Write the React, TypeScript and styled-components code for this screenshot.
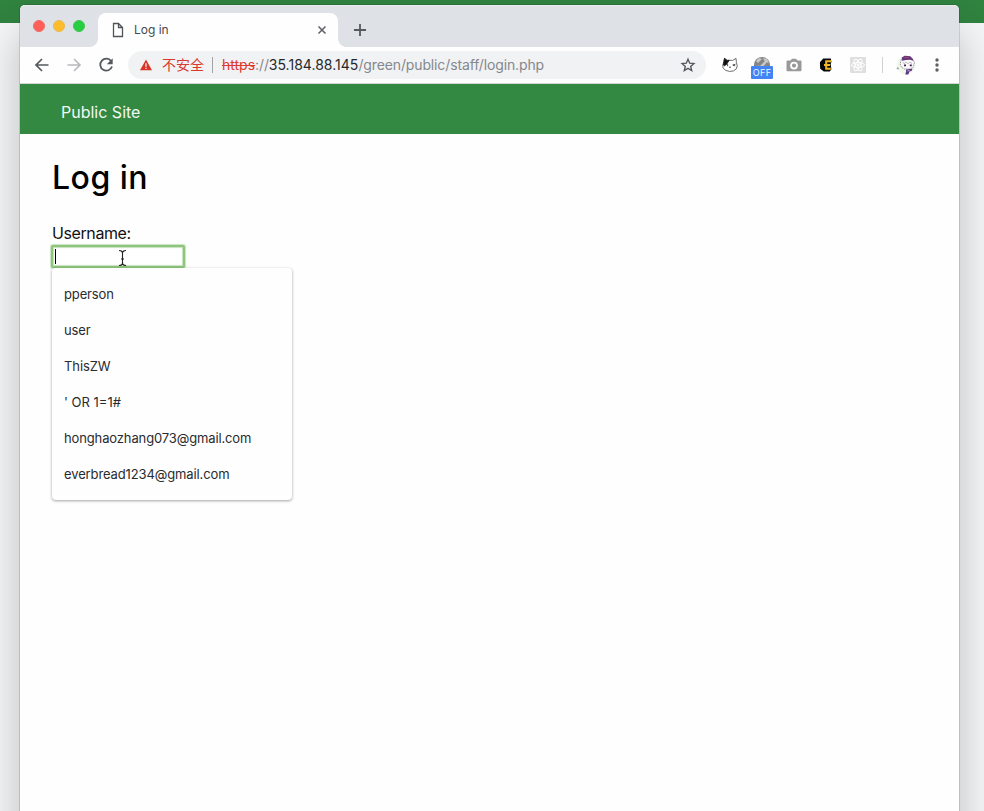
import React from 'react';
import styled, { createGlobalStyle } from 'styled-components';

const GlobalStyle = createGlobalStyle`
  * { box-sizing: border-box; }
  html, body { margin: 0; padding: 0; }
  body { font-family: Inter, 'Liberation Sans', 'Noto Sans CJK SC', sans-serif; overflow: hidden; }
`;

const Desktop = styled.div`
  width: 984px;
  height: 811px;
  padding: 5px 25px 0 20px;
  overflow: hidden;
  background: linear-gradient(#30823f 0 23px, #f4f5f6 23px);
`;

const Window = styled.main`
  width: 939px;
  height: 870px;
  border-radius: 5px 5px 0 0;
  background: #fefefe;
  box-shadow: 0 0 0 1px rgba(0, 0, 0, 0.12), 0 28px 40px rgba(0, 0, 0, 0.23);
`;

const TabStrip = styled.header`
  height: 42px;
  display: flex;
  background: #dee1e6;
  border-radius: 5px 5px 0 0;
  border-top: 1px solid #e9ebee;
`;

const Lights = styled.div`
  display: flex;
  gap: 8px;
  width: 78px;
  padding: 14.4px 0 0 13px;
`;

const Light = styled.span<{ $color: string; $edge: string }>`
  width: 12px;
  height: 12px;
  border-radius: 50%;
  background: ${(p) => p.$color};
  border: 1px solid ${(p) => p.$edge};
`;

const Tab = styled.div`
  position: relative;
  width: 240px;
  height: 34px;
  margin-top: 7px;
  padding: 0 6px 0 14px;
  display: flex;
  align-items: center;
  border-radius: 8px 8px 0 0;
  background: #fefefe;
  &::before, &::after {
    content: '';
    position: absolute;
    bottom: 0;
    width: 8px;
    height: 8px;
  }
  &::before { left: -8px; background: radial-gradient(circle at 0 0, transparent 7.5px, #fefefe 8px); }
  &::after { right: -8px; background: radial-gradient(circle at 100% 0, transparent 7.5px, #fefefe 8px); }
`;

const TabTitle = styled.span`
  flex: 1;
  margin: -2px 0 0 10px;
  font-size: 12px;
  letter-spacing: 0;
  color: #45494d;
`;

const TabClose = styled.span`
  height: 16px;
  margin-top: 4px;
`;

const NewTab = styled.div`
  padding: 17px 0 0 15px;
`;

const Toolbar = styled.nav`
  height: 37px;
  display: flex;
  align-items: center;
  border-bottom: 1px solid #d5d8d8;
  background: #fefefe;
  svg { display: block; flex: none; }
`;

const NavButtons = styled.div`
  display: flex;
  gap: 16px;
  width: 108px;
  padding-left: 14px;
`;

const AddressBar = styled.div`
  width: 578px;
  height: 28px;
  padding: 0 10px 0 12px;
  display: flex;
  align-items: center;
  border-radius: 14px;
  background: #f1f2f4;
  font-size: 14px;
  white-space: nowrap;
`;

const Warning = styled.span`
  width: 42px;
  margin: -2px 8px 0 10px;
  font: 14px/20px 'Noto Sans CJK SC', sans-serif;
  color: #d93a2e;
`;

const Divider = styled.i<{ $light?: boolean }>`
  width: 1px;
  height: 16px;
  background: ${(p) => (p.$light ? '#d0d1d3' : '#a2a4a7')};
`;

const Url = styled.span`
  flex: 1;
  margin: -1px 0 0 9px;
  color: #85888c;
  letter-spacing: -0.13px;
`;
const Scheme = styled.s`
  color: #e0392d;
  letter-spacing: 0;
`;
const Host = styled.span`
  color: #25282b;
  letter-spacing: 0.02px;
`;

const Extensions = styled.div`
  display: flex;
  align-items: center;
  width: 160px;
  margin-left: 16px;
  gap: 16px;
`;

const SpeedBadge = styled.div`
  position: relative;
  width: 20px;
  height: 20px;
  margin: 0 -2px;
  padding: 1px 0 0 2px;
`;

const OffLabel = styled.b`
  position: absolute;
  left: -1px;
  top: 11px;
  width: 22px;
  height: 13px;
  border-radius: 1px;
  background: #4384f4;
  color: #eef5ff;
  font: 9px/14px Inter, sans-serif;
  letter-spacing: 0.4px;
  text-align: center;
`;

const Profile = styled.div`
  display: flex;
  align-items: center;
  gap: 13px;
`;

const SiteHeader = styled.div`
  height: 50px;
  padding: 18px 41px 0;
  background: #338942;
  color: #f2f8f3;
  font-size: 16px;
  line-height: 21px;
  letter-spacing: 0;
`;

const Content = styled.section`
  padding: 24px 32px;
`;

const Title = styled.h1`
  margin: 0;
  font-size: 32px;
  line-height: 40px;
  font-weight: 500;
  letter-spacing: 0.5px;
  color: #000;
`;

const Label = styled.label`
  display: block;
  margin-top: 25px;
  font-size: 16px;
  line-height: 20px;
  letter-spacing: -0.4px;
  color: #111;
`;

const Field = styled.div`
  position: relative;
  width: 134px;
  height: 23px;
  margin: 2px 0 0 -1px;
  padding: 4px 0 0 4px;
  border: 2px solid #8ec57d;
  border-radius: 2px;
  box-shadow: 0 0 1px 1px #c9e4c0, inset 0 0 1px 1px #c5e2bc;
  background: #fff;
`;

const Caret = styled.i`
  display: block;
  width: 1px;
  height: 15px;
  margin: -2px 0 0 -2px;
  background: #000;
`;

const Pointer = styled.svg`
  position: absolute;
  left: 64px;
  top: 2px;
`;

const Suggestions = styled.ul`
  position: relative;
  list-style: none;
  width: 240px;
  height: 232px;
  margin: 0;
  padding: 8px 0;
  border-radius: 3px 3px 4px 4px;
  background: #fefefe;
  box-shadow: 0 1px 3px rgba(0, 0, 0, 0.35), 0 0 1px rgba(0, 0, 0, 0.12);
`;

const Suggestion = styled.li<{ $spacing: number }>`
  height: 36px;
  padding-left: 12px;
  font-size: 13px;
  line-height: 37px;
  letter-spacing: ${(p) => p.$spacing}px;
  color: #292b2e;
`;

const suggestions = [
  { name: 'pperson', spacing: -0.13 },
  { name: 'user', spacing: -0.13 },
  { name: 'ThisZW', spacing: -0.1 },
  { name: "' OR 1=1#", spacing: 0 },
  { name: 'honghaozhang073@gmail.com', spacing: -0.13 },
  { name: 'everbread1234@gmail.com', spacing: -0.12 },
];

const Stroke = ({ d, size = 16, color = '#55595e', width = 1.8 }: { d: string; size?: number; color?: string; width?: number }) => (
  <svg width={size} height={size} viewBox="0 0 16 16" fill="none" stroke={color} strokeWidth={width}><path d={d} /></svg>
);

const CatIcon = () => (
  <svg width="16" height="16" viewBox="0 0 16 16" fill="none" stroke="#4a4a4a" strokeWidth=".8">
    <path d="M2 5 2.6 1.4 5.4 3.6Q8 3 10.7 3.4L14 1.4 14.4 5.4Q16.2 9 14.2 12 11.8 14.8 7.5 14.4 2.6 14 1 10.8.2 7.5 2 5Z" fill="#fff" />
    <path d="M1.4 8 2.4 1.4 5 3.4 7.2 3.2 5.8 5.4 4.4 7.5 2.4 8.8Z" fill="#111" stroke="#111" />
    <path d="M5.6 6.8v2.4M13.4 7.2l-2.6.9 2.4.8M7 9.8l1 .8 1-.8" stroke="#222" />
  </svg>
);

const GaugeIcon = () => (
  <svg width="16" height="16" viewBox="0 0 16 16">
    <path d="M0 9a8 8 0 0 1 16 0v3H0Z" fill="#858585" />
    <path d="m2 5 3-3 3 1-4 4ZM9 2l4 1 2 4-4-1ZM3 9l3 1 5-5 2 1-5 6Z" fill="#c9c9c9" />
  </svg>
);

const CameraIcon = () => (
  <svg width="16" height="16" viewBox="0 0 16 16">
    <path d="M1.5 3.5h3L6 1.8h4l1.5 1.7h3a1 1 0 0 1 1 1v8.8a1 1 0 0 1-1 1h-13a1 1 0 0 1-1-1V4.5a1 1 0 0 1 1-1Z" fill="#999" />
    <circle cx="8" cy="8.6" r="3" fill="#999" stroke="#fff" strokeWidth="1.8" />
  </svg>
);

const CoinIcon = () => (
  <svg width="16" height="16" viewBox="0 0 16 16">
    <path d="M5.5 2h6.8l.5 3-.8 2 .8 5-1.3 2H6l-3.2-2.5-.3-6Z" fill="#080808" stroke="#080808" strokeWidth="1.2" />
    <path d="M13 4.2H8.2v7.6h4.6M6 8h6" fill="none" stroke="#f0b925" strokeWidth="2" />
  </svg>
);

const AtomIcon = () => (
  <svg width="16" height="16" viewBox="0 0 16 16">
    <rect width="16" height="16" rx="1" fill="#dfdfdf" />
    <g fill="none" stroke="#fff" strokeWidth="1">
      <ellipse cx="8" cy="8" rx="6.5" ry="2.5" />
      <ellipse cx="8" cy="8" rx="6.5" ry="2.5" transform="rotate(60 8 8)" />
      <ellipse cx="8" cy="8" rx="6.5" ry="2.5" transform="rotate(120 8 8)" />
      <circle cx="8" cy="8" r="1" fill="#fff" />
    </g>
  </svg>
);

const Avatar = () => (
  <svg width="20" height="20" viewBox="0 0 20 20">
    <circle cx="10" cy="10" r="9.5" fill="#f0f8ee" />
    <path d="M5 5.5C6 .5 16 .5 17 5l1.5 2.5-1.5 5-3 1.5H8L5 11.5 4.2 9Z" fill="#faf8fb" stroke="#858085" strokeWidth=".8" strokeDasharray="1.5 .7" />
    <path d="m5.8 2.6 3-1.8 5.5.4 2.9 3.3v1.3l-3-1-4 .2-4 .8Z" fill="#65377b" />
    <path d="m8.5 2.3 4 .2" stroke="#b43f65" strokeWidth="1" />
    <path d="m7 7 1 1.8L10 7l2 1.8L14 7l2 1.5" fill="none" stroke="#aaa5ad" strokeWidth=".7" />
    <path d="M8 10.3h2M13.8 10.3h2" stroke="#47254e" strokeWidth="1.7" />
    <path d="m10 14.4 6.5-.6-1 2.2-2 .6-1.2 2.8-3 .2.8-3.2Z" fill="#5c3a83" />
    <path d="m11.5 16 2-.5" stroke="#eee" strokeWidth=".7" />
    <path d="m.8 13.2 2 .5" stroke="#9aa99f" strokeWidth="1.8" />
  </svg>
);

export default function App() {
  return (
    <>
      <GlobalStyle />
      <Desktop>
        <Window>
          <TabStrip>
            <Lights>
              <Light $color="#ff5f58" $edge="#ee6b67" />
              <Light $color="#ffbd2e" $edge="#e9b84b" />
              <Light $color="#28cd41" $edge="#3fc552" />
            </Lights>
            <Tab>
              <svg width="12" height="16" viewBox="0 0 12 16" fill="none" stroke="#505357" strokeWidth="1.3"><path d="M1.5 1.5h5L10.5 5.5v9h-9ZM6.5 1.5v4h4" /></svg>
              <TabTitle>Log in</TabTitle>
              <TabClose><Stroke d="m2.5 2.5 7 7m0-7-7 7" color="#5b5e62" width={1.5} /></TabClose>
            </Tab>
            <NewTab><Stroke d="M7 1v12M1 7h12" /></NewTab>
          </TabStrip>
          <Toolbar>
            <NavButtons>
              <Stroke d="M14.5 8H2M8 2 2 8l6 6" width={1.7} />
              <Stroke d="M1.5 8H14M8 2l6 6-6 6" color="#b7b9bc" width={1.6} />
              <svg width="16" height="16" viewBox="0 0 16 16"><path d="M13.2 4.2A6 6 0 1 0 14 9.5" fill="none" stroke="#55595e" strokeWidth="1.8" /><path d="M14.7 1.2v6H8.8Z" fill="#55595e" /></svg>
            </NavButtons>
            <AddressBar>
              <svg width="12" height="12" viewBox="0 0 12 12"><path d="M6 .5 12 11.3H0Z" fill="#d93427" /><path d="M6 4.3v3.5M6 8.7V10" stroke="#fff" strokeWidth="1.2" /></svg>
              <Warning>不安全</Warning>
              <Divider />
              <Url><Scheme>https</Scheme>://<Host>35.184.88.145</Host>/green/public/staff/login.php</Url>
              <Stroke d="m8 2.2 1.7 4 4.2.4-3.2 2.8 1 4.2L8 11.4l-3.7 2.2 1-4.2-3.2-2.8 4.2-.4Z" width={1.4} />
            </AddressBar>
            <Extensions>
              <CatIcon />
              <SpeedBadge><GaugeIcon /><OffLabel>OFF</OffLabel></SpeedBadge>
              <CameraIcon />
              <CoinIcon />
              <AtomIcon />
            </Extensions>
            <Profile>
              <Divider $light />
              <Avatar />
              <svg width="16" height="16" viewBox="0 0 16 16" fill="#5b5e62"><circle cx="8" cy="3" r="1.7" /><circle cx="8" cy="8" r="1.7" /><circle cx="8" cy="13" r="1.7" /></svg>
            </Profile>
          </Toolbar>
          <SiteHeader>Public Site</SiteHeader>
          <Content>
            <Title>Log in</Title>
            <Label>Username:</Label>
            <Field>
              <Caret />
              <Pointer width="11" height="18" viewBox="0 0 11 18" fill="none">
                <path d="M2 1.5q3 0 3.5 2 .5-2 3.5-2M5.5 3v12M2 16.5q3 0 3.5-2 .5 2 3.5 2M4 10h3" stroke="#222" strokeWidth="1.1" />
              </Pointer>
            </Field>
            <Suggestions>
              {suggestions.map(({ name, spacing }) => <Suggestion key={name} $spacing={spacing}>{name}</Suggestion>)}
            </Suggestions>
          </Content>
        </Window>
      </Desktop>
    </>
  );
}
